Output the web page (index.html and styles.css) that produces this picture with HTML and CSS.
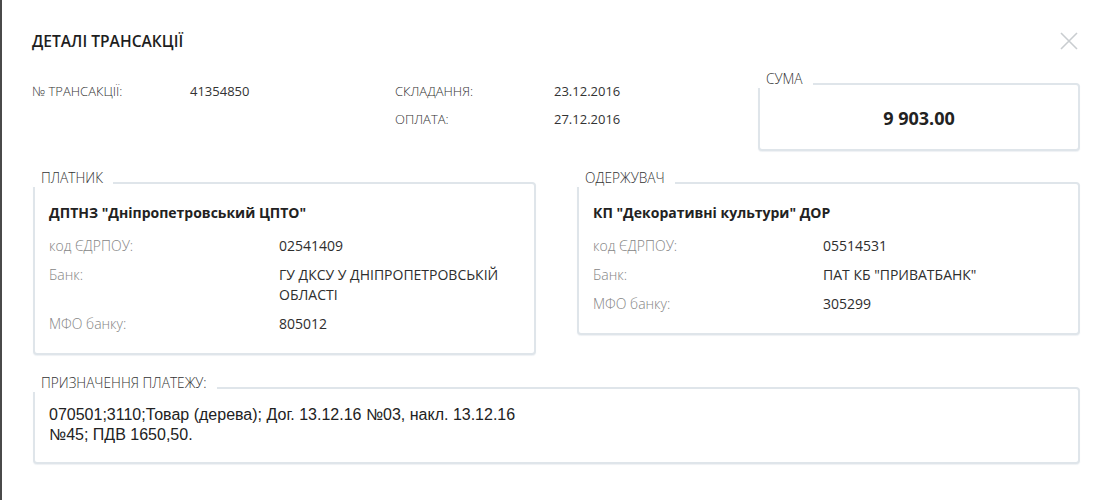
FILE: index.html
```html
<!DOCTYPE html>
<html lang="uk">
<head>
<meta charset="utf-8">
<title>Деталі трансакції</title>
<link rel="stylesheet" href="styles.css">
</head>
<body>
<div class="page">
  <div class="modal">
    <div class="modal-head">
      <h1 class="title">ДЕТАЛІ ТРАНСАКЦІЇ</h1>
      <button class="close" aria-label="Закрити">
        <svg width="18" height="18" viewBox="0 0 18 18"><path d="M1 1L17 17M17 1L1 17" stroke="#c9cdd0" stroke-width="1.6" fill="none"/></svg>
      </button>
    </div>

    <div class="top">
      <div class="info">
        <div class="info-row">
          <span class="ilabel">№ ТРАНСАКЦІЇ:</span><span class="ivalue">41354850</span>
          <span class="ilabel">СКЛАДАННЯ:</span><span class="ivalue">23.12.2016</span>
        </div>
        <div class="info-row">
          <span class="ilabel"></span><span class="ivalue"></span>
          <span class="ilabel">ОПЛАТА:</span><span class="ivalue">27.12.2016</span>
        </div>
      </div>
      <div class="box sum-box">
        <span class="box-label">СУМА</span>
        <div class="sum">9 903.00</div>
      </div>
    </div>

    <div class="parties">
      <div class="box party">
        <span class="box-label">ПЛАТНИК</span>
        <div class="pname">ДПТНЗ "Дніпропетровський ЦПТО"</div>
        <div class="prow"><span class="plabel">код ЄДРПОУ:</span><span class="pvalue">02541409</span></div>
        <div class="prow"><span class="plabel">Банк:</span><span class="pvalue">ГУ ДКСУ У ДНІПРОПЕТРОВСЬКІЙ ОБЛАСТІ</span></div>
        <div class="prow"><span class="plabel">МФО банку:</span><span class="pvalue">805012</span></div>
      </div>
      <div class="box party">
        <span class="box-label">ОДЕРЖУВАЧ</span>
        <div class="pname">КП "Декоративні культури" ДОР</div>
        <div class="prow"><span class="plabel">код ЄДРПОУ:</span><span class="pvalue">05514531</span></div>
        <div class="prow"><span class="plabel">Банк:</span><span class="pvalue">ПАТ КБ "ПРИВАТБАНК"</span></div>
        <div class="prow"><span class="plabel">МФО банку:</span><span class="pvalue">305299</span></div>
      </div>
    </div>

    <div class="box purpose">
      <span class="box-label">ПРИЗНАЧЕННЯ ПЛАТЕЖУ:</span>
      <p class="purpose-text">070501;3110;Товар (дерева); Дог. 13.12.16 №03, накл. 13.12.16 №45; ПДВ 1650,50.</p>
    </div>
  </div>
</div>
</body>
</html>
```

FILE: styles.css
```css
* { box-sizing: border-box; }
html, body { margin: 0; padding: 0; background: #fff; }
body { font-family: "Open Sans", "Liberation Sans", sans-serif; color: #333; }

.page {
  border-left: 2px solid #4a4a4a;
  min-height: 500px;
}

.modal {
  padding: 31px 28px 0 30px;
}

.modal-head {
  display: flex;
  justify-content: space-between;
  align-items: flex-start;
  height: 20px;
}

.title {
  margin: 0;
  font-size: 15.6px;
  line-height: 20px;
  font-weight: 600;
  color: #1e1e1e;
}

.close {
  border: 0;
  background: none;
  padding: 0;
  margin: 1px 2px 0 0;
  width: 18px;
  height: 18px;
  cursor: pointer;
}
.close svg { display: block; }

.top {
  display: flex;
  justify-content: space-between;
  margin-top: 30px;
}

.info-row {
  display: grid;
  grid-template-columns: 158px 205px 159px 120px;
  font-size: 13px;
  line-height: 20px;
  margin-bottom: 8px;
}

.ilabel { color: #333; font-weight: 300; }
.ivalue { color: #333; }

.box {
  position: relative;
  border: 2px solid #dfe5ea;
  border-radius: 4px;
  background: #fff;
  box-shadow: 0 1px 1px rgba(200, 210, 218, 0.3);
}

.box-label {
  position: absolute;
  top: -15px;
  left: -2px;
  padding: 0 10px 0 8px;
  background: #fff;
  font-size: 13.7px;
  line-height: 18px;
  font-weight: 300;
  color: #333;
}

.sum-box {
  width: 322px;
  height: 68px;
  margin-top: 2px;
  display: flex;
  align-items: center;
  justify-content: center;
}

.sum {
  font-size: 18px;
  font-weight: 700;
  color: #222;
  line-height: 22px;
  padding-top: 1px;
}

.parties {
  display: flex;
  justify-content: space-between;
  align-items: flex-start;
  margin-top: 31px;
  padding-left: 1px;
}

.party {
  width: 503px;
  padding: 19px 14px 19px 14px;
}

.pname {
  font-size: 14px;
  font-weight: 700;
  line-height: 20px;
  color: #222;
  margin-bottom: 13px;
}

.prow {
  display: grid;
  grid-template-columns: 230px 1fr;
  font-size: 14px;
  line-height: 20px;
  margin-bottom: 9px;
}
.prow:last-child { margin-bottom: 0; }

.plabel { color: #858585; font-weight: 300; }
.pvalue { color: #2e2e2e; padding-right: 10px; }

.purpose {
  margin-top: 32px;
  margin-left: 1px;
  padding: 16px 14px 17px 14px;
}

.purpose-text {
  margin: 0;
  max-width: 480px;
  font-family: "Liberation Sans", Arial, sans-serif;
  font-size: 16px;
  line-height: 20px;
  color: #222;
}
```
